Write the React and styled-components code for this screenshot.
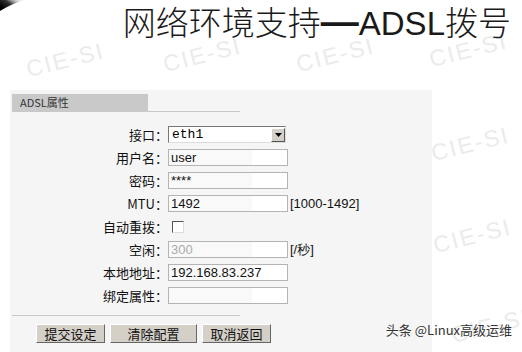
import styled, { createGlobalStyle } from 'styled-components'

const GlobalStyle = createGlobalStyle`
  html, body {
    margin: 0;
    padding: 0;
    background: #fff;
  }
  body {
    font-family: "Noto Sans CJK SC", "Liberation Sans", sans-serif;
  }
`;

const marks = [
  [30, 56], [167, 51], [300, 51], [433, 46],
  [435, 140], [437, 232], [455, 322],
];

const rows = [
  { label: '接口', kind: 'select', value: 'eth1' },
  { label: '用户名', kind: 'text', value: 'user' },
  { label: '密码', kind: 'text', value: '****' },
  { label: 'MTU', kind: 'text', value: '1492', note: '[1000-1492]' },
  { label: '自动重拨', kind: 'check' },
  { label: '空闲', kind: 'text', value: '300', muted: true, note: '[/秒]' },
  { label: '本地地址', kind: 'text', value: '192.168.83.237' },
  { label: '绑定属性', kind: 'text', value: '' },
];

function Field({ row }) {
  if (row.kind === 'select') {
    return (
      <Select>
        <span>{row.value}</span>
        <DropBtn>
          <svg width="7" height="4" viewBox="0 0 7 4"><path d="M0 0h7L3.5 4z" fill="#000" /></svg>
        </DropBtn>
      </Select>
    );
  }
  if (row.kind === 'check') return <CheckWrap><Check /></CheckWrap>;
  return (
    <FieldLine>
      <Input muted={row.muted}>{row.value}</Input>
      {row.note && <Note>{row.note}</Note>}
    </FieldLine>
  );
}

export default function App() {
  return (
    <Slide>
      <GlobalStyle />
      <Swoosh width="30" height="14" viewBox="0 0 30 14">
        <defs>
          <linearGradient id="sw" x1="0" y1="0.6" x2="1" y2="0">
            <stop offset="0" stopColor="#000" />
            <stop offset="0.4" stopColor="#333" />
            <stop offset="1" stopColor="#fff" stopOpacity="0" />
          </linearGradient>
        </defs>
        <path d="M0 0 H26 C16 2 8 6 0 11z" fill="url(#sw)" />
      </Swoosh>
      {marks.map(([x, y], i) => (
        <Mark key={i} style={{ left: x, top: y }}>CIE-SI</Mark>
      ))}
      <Title>网络环境支持<Dash>—</Dash><Latin>ADSL</Latin>拨号</Title>
      <Panel>
        <Tab>ADSL属性</Tab>
        <Rule />
        <Form>
          {rows.map((r) => (
            <Row key={r.label}>
              <Label>{r.label}：</Label>
              <Field row={r} />
            </Row>
          ))}
        </Form>
        <Rule />
        <Buttons>
          <Btn w={69}>提交设定</Btn>
          <Btn w={87}>清除配置</Btn>
          <Btn w={69}>取消返回</Btn>
        </Buttons>
      </Panel>
      <Credit>头条 @Linux高级运维</Credit>
    </Slide>
  );
}

const Slide = styled.div`
  position: relative;
  width: 522px;
  height: 352px;
  overflow: hidden;
  background: #fff;
  display: flex;
  flex-direction: column;
`;

const Swoosh = styled.svg`
  position: absolute;
  left: 0;
  top: 0;
`;

const Mark = styled.div`
  position: absolute;
  font-family: "Liberation Sans", sans-serif;
  font-size: 23px;
  letter-spacing: 2px;
  color: #ebebeb;
  transform: rotate(-14deg);
  transform-origin: left bottom;
  white-space: nowrap;
`;

const Title = styled.h1`
  position: relative;
  margin: 0;
  height: 90px;
  padding: 0 11px 0 0;
  text-align: right;
  font-family: "Noto Sans CJK SC", sans-serif;
  font-weight: 300;
  font-size: 33px;
  line-height: 42px;
  color: #1a1a1a;
  white-space: nowrap;
`;

const Dash = styled.span`
  font-family: "Liberation Sans", sans-serif;
  font-weight: 700;
  font-size: 38px;
`;

const Latin = styled.span`
  font-family: "Liberation Sans", sans-serif;
  font-weight: 400;
`;

const Panel = styled.div`
  position: relative;
  margin-left: 10px;
  width: 422px;
  flex: 1;
  background: #f5f5f5;
  padding: 4px 0 0 2px;
  box-sizing: border-box;
`;

const Tab = styled.div`
  width: 136px;
  height: 17px;
  background: #c9c9c9;
  color: #333;
  font-size: 11px;
  line-height: 17px;
  padding-left: 8px;
  box-sizing: border-box;
`;

const Rule = styled.div`
  width: 228px;
  height: 1px;
  background: #c8c8c8;
`;

const Form = styled.div`
  display: flex;
  flex-direction: column;
  gap: 6px;
  padding: 13px 0 12px;
`;

const Row = styled.div`
  display: grid;
  grid-template-columns: 156px auto;
  align-items: center;
  height: 17px;
`;

const Label = styled.div`
  text-align: right;
  font-size: 13px;
  color: #111;
  white-space: nowrap;
`;

const FieldLine = styled.div`
  display: flex;
  align-items: center;
`;

const Input = styled.div`
  width: 120px;
  height: 17px;
  box-sizing: border-box;
  border: 1px solid #b4b4b4;
  background: linear-gradient(90deg, #f9f9f9 70%, #fff 70%);
  font-family: "Liberation Sans", sans-serif;
  font-size: 13px;
  line-height: 15px;
  padding-left: 2px;
  color: ${(p) => (p.muted ? '#aaa' : '#111')};
`;

const Note = styled.span`
  margin-left: 2px;
  font-family: "Liberation Sans", sans-serif;
  font-size: 13px;
  color: #111;
`;

const Select = styled.div`
  width: 118px;
  height: 17px;
  box-sizing: border-box;
  border: 1px solid #777;
  border-right-color: #ddd;
  border-bottom-color: #ddd;
  background: #fff;
  display: flex;
  align-items: center;
  justify-content: space-between;
  font-family: "Liberation Mono", monospace;
  font-size: 13px;
  padding-left: 3px;
  span { line-height: 15px; }
`;

const DropBtn = styled.div`
  width: 14px;
  height: 14px;
  background: #d4d0c8;
  border: 1px solid;
  border-color: #fff #555 #555 #fff;
  box-sizing: border-box;
  display: flex;
  align-items: center;
  justify-content: center;
`;

const CheckWrap = styled.div`
  padding-left: 4px;
  display: flex;
`;

const Check = styled.div`
  width: 12px;
  height: 12px;
  box-sizing: border-box;
  border: 1px solid;
  border-color: #555 #ddd #ddd #555;
  background: #fff;
`;

const Buttons = styled.div`
  display: flex;
  gap: 5px;
  padding: 8px 0 0 24px;
`;

const Btn = styled.div`
  width: ${(p) => p.w}px;
  height: 19px;
  box-sizing: border-box;
  background: #d4d0c8;
  border: 1px solid;
  border-color: #fff #666 #666 #fff;
  font-size: 13px;
  line-height: 17px;
  text-align: center;
  color: #111;
`;

const Credit = styled.div`
  position: absolute;
  right: 10px;
  bottom: 13px;
  font-size: 13px;
  color: #333;
  text-shadow: 0 0 2px #fff;
`;
